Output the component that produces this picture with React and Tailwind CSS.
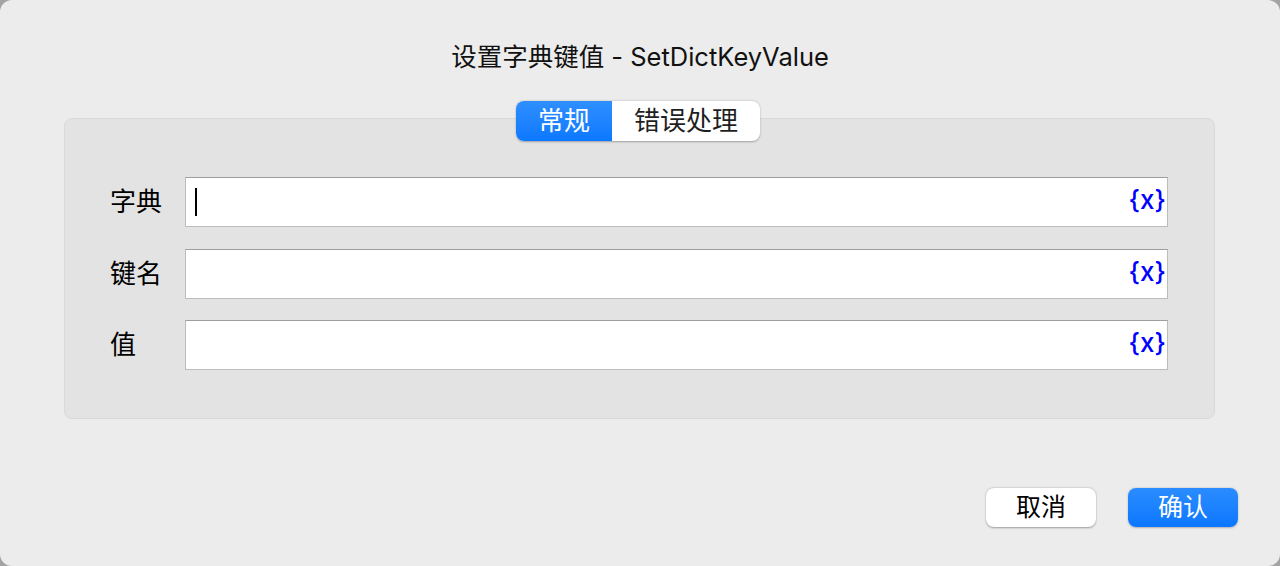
const cjk = { fontFamily: 'Inter, "Noto Sans CJK SC", "Noto Sans", sans-serif' };

function Field({ label, caret }) {
  return (
    <div className="flex items-center h-[50px]">
      <div className="w-[75px] text-[26px] leading-none text-black" style={cjk}>
        {label}
      </div>
      <div className="relative flex-1 h-[50px] bg-white border border-[#bcbcbc] border-t-[#9e9e9e] flex items-center">
        {caret && <span className="ml-[9px] w-[2px] h-[28px] bg-black" />}
        <span
          className="absolute right-[1px] top-[6px] text-[26px] leading-[32px] font-medium text-[#0000ff]"
          style={{ fontFamily: 'Inter, "Liberation Sans", sans-serif' }}
        >
          {"{x}"}
        </span>
      </div>
    </div>
  );
}

export default function App() {
  return (
    <div className="w-[1280px] h-[566px] bg-[#a3a3a3]">
      <div className="h-full rounded-[12px] bg-[#ececec] flex flex-col" style={cjk}>
        <div className="pt-[39px] text-center text-[25.5px] leading-[36px] text-[#111]">
          设置字典键值 - SetDictKeyValue
        </div>

        <div className="relative mt-[43px] ml-[64px] mr-[65px] rounded-[8px] border border-[#d9d9d9] bg-[#e3e3e3] pt-[58px] pb-[48px] pl-[45px] pr-[46px]">
          <div className="absolute left-[451px] top-[-18px] flex h-[40px] w-[244px] rounded-[8px] bg-white shadow-[0_0.5px_2px_rgba(0,0,0,0.3)] overflow-hidden">
            <div className="w-[96px] flex items-center justify-center bg-gradient-to-b from-[#2f8fff] to-[#0a78ff] text-white text-[26px] leading-none">
              常规
            </div>
            <div className="flex-1 flex items-center justify-center text-[#1f1f1f] text-[26px] leading-none">
              错误处理
            </div>
          </div>

          <div className="flex flex-col gap-[21.5px]">
            <Field label="字典" caret />
            <Field label="键名" />
            <Field label="值" />
          </div>
        </div>

        <div className="mt-[69px] flex justify-end gap-[32px] pr-[42px]">
          <button className="w-[110px] h-[39px] rounded-[8px] bg-white text-black text-[25px] leading-none shadow-[0_0.5px_2px_rgba(0,0,0,0.35)] flex items-center justify-center">
            取消
          </button>
          <button className="w-[110px] h-[39px] rounded-[8px] bg-gradient-to-b from-[#2a8cff] to-[#0a77ff] text-white text-[25px] leading-none shadow-[0_0.5px_2px_rgba(0,0,0,0.25)] flex items-center justify-center">
            确认
          </button>
        </div>
      </div>
    </div>
  );
}
